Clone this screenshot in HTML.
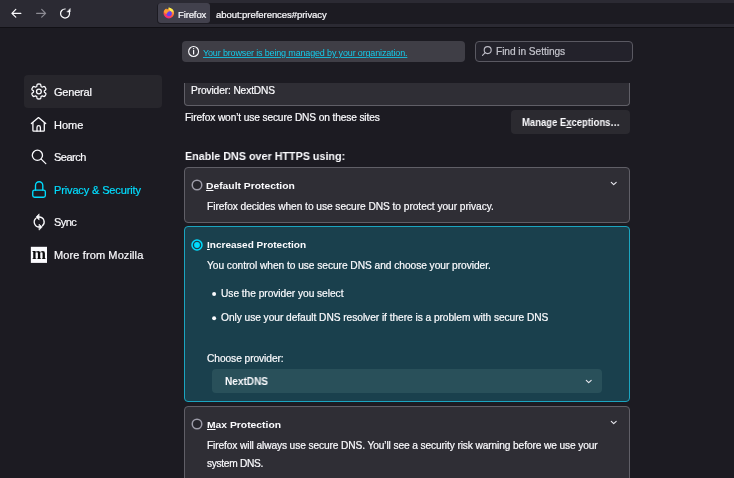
<!DOCTYPE html>
<html><head><meta charset="utf-8"><style>
html,body{margin:0;padding:0;}
body{width:734px;height:478px;overflow:hidden;background:#1c1b22;position:relative;font-family:"Liberation Sans",sans-serif;}
.t{position:absolute;white-space:pre;will-change:transform;-webkit-text-stroke:0.2px currentColor;}
.r{position:absolute;}
u{text-decoration-thickness:1px;text-underline-offset:0.6px;}
</style></head><body>
<div class="r" style="left:0px;top:0px;width:734.00px;height:26.70px;background:#2b2a33;"></div>
<div class="r" style="left:0px;top:26.7px;width:734.00px;height:1.10px;background:#111015;"></div>
<div class="r" style="left:157px;top:2.5px;width:583.00px;height:21.30px;background:#1c1b22;border-radius:4px;"></div>
<div class="r" style="left:158px;top:3px;width:52.00px;height:19.50px;background:#42414d;border-radius:3px;"></div>
<svg class="r" style="left:158px;top:3px" width="22" height="20" viewBox="0 0 22 20">
<defs><linearGradient id="fg" x1="0.75" y1="0" x2="0.35" y2="1"><stop offset="0" stop-color="#fff44f"/><stop offset="0.3" stop-color="#ffa435"/><stop offset="0.65" stop-color="#ff5a3a"/><stop offset="1" stop-color="#f0178f"/></linearGradient></defs>
<circle cx="10.8" cy="10.1" r="5.3" fill="url(#fg)"/>
<path d="M8.2 4.2 L10.6 4.2 L10.2 6.6 L8.4 6.4 Z" fill="#42414d"/>
<path d="M10.6 4.3 C12.8 5 14.8 6.6 15.6 8.6 L12.4 8.8 Z" fill="#fff04a"/>
<circle cx="11.1" cy="10.5" r="2.7" fill="#6a3df0"/>
<path d="M5.8 8.6 C6.4 7 7.6 6 9.2 6.2 C10.6 6.4 11.6 7.4 11.8 8.6 C10.6 8.4 9.6 8.9 9.1 10.2 C8.4 11.2 6.6 10.8 5.8 8.6 Z" fill="#ff9a30"/>
</svg>
<div class="t" id="ff" style="left:177.50px;top:9.66px;font-size:9.5px;line-height:9.5px;color:#fbfbfe;font-weight:400;letter-spacing:-0.123px;">Firefox</div>
<div class="t" id="url" style="left:215.60px;top:9.66px;font-size:9.5px;line-height:9.5px;color:#fbfbfe;font-weight:400;letter-spacing:-0.048px;">about:preferences#privacy</div>
<svg class="r" style="left:0px;top:0px" width="80" height="27" viewBox="0 0 80 27" fill="none" stroke-linecap="round" stroke-linejoin="round">
<path d="M11.9 13.3 H20.9 M15.8 9.4 L11.9 13.3 L15.8 17.2" stroke="#fbfbfe" stroke-width="1.2"/>
<path d="M45.6 13.3 H36.6 M41.7 9.4 L45.6 13.3 L41.7 17.2" stroke="#8c8b93" stroke-width="1.2"/>
<path d="M65 9 A4.5 4.5 0 1 0 69.4 12.3" stroke="#fbfbfe" stroke-width="1.25"/>
<path d="M67.2 11.9 L70.2 11.9 L70.2 8.8 Z" fill="#fbfbfe" stroke="#fbfbfe" stroke-width="0.5"/>
</svg>
<div class="r" style="left:24px;top:75px;width:138.00px;height:32.50px;background:#27262c;border-radius:4px;"></div>
<div class="t" id="sb1" style="left:53.60px;top:87.19px;font-size:11px;line-height:11px;color:#fbfbfe;font-weight:400;letter-spacing:-0.206px;">General</div>
<div class="t" id="sb2" style="left:53.60px;top:119.79px;font-size:11px;line-height:11px;color:#fbfbfe;font-weight:400;letter-spacing:0.018px;">Home</div>
<div class="t" id="sb3" style="left:53.60px;top:152.19px;font-size:11px;line-height:11px;color:#fbfbfe;font-weight:400;letter-spacing:-0.492px;">Search</div>
<div class="t" id="sb4" style="left:53.60px;top:184.59px;font-size:11px;line-height:11px;color:#00ddff;font-weight:400;letter-spacing:-0.138px;">Privacy &amp; Security</div>
<div class="t" id="sb5" style="left:53.60px;top:217.39px;font-size:11px;line-height:11px;color:#fbfbfe;font-weight:400;letter-spacing:-0.590px;">Sync</div>
<div class="t" id="sb6" style="left:53.60px;top:249.59px;font-size:11px;line-height:11px;color:#fbfbfe;font-weight:400;letter-spacing:0.118px;">More from Mozilla</div>
<svg class="r" style="left:28px;top:80px" width="22" height="22" viewBox="0 0 22 22" fill="none" stroke="#fbfbfe" stroke-width="1.3" stroke-linecap="round" stroke-linejoin="round"><path d="M16.29 11.50 L16.29 11.64 L16.30 11.78 L16.33 11.93 L16.38 12.08 L16.46 12.23 L16.61 12.40 L16.84 12.60 L17.14 12.83 L17.45 13.07 L17.70 13.32 L17.85 13.56 L17.90 13.78 L17.90 13.98 L17.87 14.17 L17.81 14.36 L17.74 14.55 L17.67 14.73 L17.58 14.90 L17.49 15.08 L17.40 15.25 L17.29 15.42 L17.19 15.58 L17.08 15.75 L16.96 15.90 L16.84 16.05 L16.70 16.20 L16.55 16.33 L16.37 16.43 L16.16 16.49 L15.88 16.48 L15.54 16.39 L15.17 16.24 L14.82 16.09 L14.54 15.99 L14.31 15.95 L14.14 15.95 L13.98 15.99 L13.85 16.04 L13.72 16.10 L13.60 16.17 L13.47 16.24 L13.36 16.32 L13.24 16.42 L13.14 16.53 L13.05 16.68 L12.97 16.90 L12.92 17.19 L12.87 17.57 L12.81 17.96 L12.72 18.30 L12.59 18.55 L12.43 18.70 L12.25 18.81 L12.07 18.87 L11.88 18.92 L11.68 18.95 L11.49 18.97 L11.29 18.99 L11.10 19.00 L10.90 19.00 L10.70 19.00 L10.51 18.99 L10.31 18.97 L10.12 18.95 L9.92 18.92 L9.73 18.87 L9.55 18.81 L9.37 18.70 L9.21 18.55 L9.08 18.30 L8.99 17.96 L8.93 17.57 L8.88 17.19 L8.83 16.90 L8.75 16.68 L8.66 16.53 L8.56 16.42 L8.44 16.32 L8.33 16.24 L8.20 16.17 L8.08 16.10 L7.95 16.04 L7.82 15.99 L7.66 15.95 L7.49 15.95 L7.26 15.99 L6.98 16.09 L6.63 16.24 L6.26 16.39 L5.92 16.48 L5.64 16.49 L5.43 16.43 L5.25 16.33 L5.10 16.20 L4.96 16.05 L4.84 15.90 L4.72 15.75 L4.61 15.58 L4.51 15.42 L4.40 15.25 L4.31 15.08 L4.22 14.90 L4.13 14.73 L4.06 14.55 L3.99 14.36 L3.93 14.17 L3.90 13.98 L3.90 13.78 L3.95 13.56 L4.10 13.32 L4.35 13.07 L4.66 12.83 L4.96 12.60 L5.19 12.40 L5.34 12.23 L5.42 12.08 L5.47 11.93 L5.50 11.78 L5.51 11.64 L5.51 11.50 L5.51 11.36 L5.50 11.22 L5.47 11.07 L5.42 10.92 L5.34 10.77 L5.19 10.60 L4.96 10.40 L4.66 10.17 L4.35 9.93 L4.10 9.68 L3.95 9.44 L3.90 9.22 L3.90 9.02 L3.93 8.83 L3.99 8.64 L4.06 8.45 L4.13 8.27 L4.22 8.10 L4.31 7.92 L4.40 7.75 L4.51 7.58 L4.61 7.42 L4.72 7.25 L4.84 7.10 L4.96 6.95 L5.10 6.80 L5.25 6.67 L5.43 6.57 L5.64 6.51 L5.92 6.52 L6.26 6.61 L6.63 6.76 L6.98 6.91 L7.26 7.01 L7.49 7.05 L7.66 7.05 L7.82 7.01 L7.95 6.96 L8.08 6.90 L8.20 6.83 L8.33 6.76 L8.44 6.68 L8.56 6.58 L8.66 6.47 L8.75 6.32 L8.83 6.10 L8.88 5.81 L8.93 5.43 L8.99 5.04 L9.08 4.70 L9.21 4.45 L9.37 4.30 L9.55 4.19 L9.73 4.13 L9.92 4.08 L10.12 4.05 L10.31 4.03 L10.51 4.01 L10.70 4.00 L10.90 4.00 L11.10 4.00 L11.29 4.01 L11.49 4.03 L11.68 4.05 L11.88 4.08 L12.07 4.13 L12.25 4.19 L12.43 4.30 L12.59 4.45 L12.72 4.70 L12.81 5.04 L12.87 5.43 L12.92 5.81 L12.97 6.10 L13.05 6.32 L13.14 6.47 L13.24 6.58 L13.36 6.68 L13.47 6.76 L13.60 6.83 L13.72 6.90 L13.85 6.96 L13.98 7.01 L14.14 7.05 L14.31 7.05 L14.54 7.01 L14.82 6.91 L15.17 6.76 L15.54 6.61 L15.88 6.52 L16.16 6.51 L16.37 6.57 L16.55 6.67 L16.70 6.80 L16.84 6.95 L16.96 7.10 L17.08 7.25 L17.19 7.42 L17.29 7.58 L17.40 7.75 L17.49 7.92 L17.58 8.10 L17.67 8.27 L17.74 8.45 L17.81 8.64 L17.87 8.83 L17.90 9.02 L17.90 9.22 L17.85 9.44 L17.70 9.68 L17.45 9.93 L17.14 10.17 L16.84 10.40 L16.61 10.60 L16.46 10.77 L16.38 10.92 L16.33 11.07 L16.30 11.22 L16.29 11.36 L16.29 11.50Z"/><circle cx="10.9" cy="11.5" r="2.4"/></svg>
<svg class="r" style="left:28px;top:114px" width="22" height="22" viewBox="0 0 22 22" fill="none" stroke="#fbfbfe" stroke-width="1.3" stroke-linecap="round" stroke-linejoin="round"><path d="M3.4 9.6 L10.5 3.6 L17.7 9.6"/><path d="M4.9 8.6 V16.4 Q4.9 17.1 5.6 17.1 H15.6 Q16.3 17.1 16.3 16.4 V8.6"/><path d="M9 17.1 V13.4 A1.7 1.7 0 0 1 12.4 13.4 V17.1"/></svg>
<svg class="r" style="left:28px;top:147px" width="22" height="22" viewBox="0 0 22 22" fill="none" stroke="#fbfbfe" stroke-width="1.3" stroke-linecap="round" stroke-linejoin="round"><circle cx="9.4" cy="8.3" r="5.1"/><path d="M13.2 12.1 L17.8 16.6"/></svg>
<svg class="r" style="left:28px;top:179px" width="22" height="22" viewBox="0 0 22 22" fill="none" stroke="#00ddff" stroke-width="1.35" stroke-linecap="round" stroke-linejoin="round"><path d="M7.5 11 V6.4 A3.65 3.65 0 0 1 14.8 6.4 V11"/><rect x="4.75" y="11.05" width="12.6" height="7.2" rx="1.8"/></svg>
<svg class="r" style="left:28px;top:211px" width="22" height="22" viewBox="0 0 22 22" fill="none" stroke="#fbfbfe" stroke-width="1.3" stroke-linecap="round" stroke-linejoin="round"><path d="M11.2 6 A5 5 0 0 1 14.4 14.8"/><path d="M11.2 16 A5 5 0 0 1 8 7.2"/><path d="M10.9 3.1 L8 5.95 L10.9 8.8 Z M11.3 13.3 L14.2 16.1 L11.3 18.9 Z" fill="#fbfbfe" stroke-width="0.6"/></svg>
<svg class="r" style="left:28px;top:244px;will-change:transform" width="22" height="22" viewBox="0 0 22 22"><rect x="2.85" y="2.8" width="16.15" height="16.1" fill="#fbfbfe"/><text x="4" y="15" font-family="Liberation Serif" font-weight="bold" font-size="17.5" textLength="14" lengthAdjust="spacingAndGlyphs" fill="#0c0c0d">m</text></svg>
<div class="r" style="left:182px;top:41px;width:283.00px;height:21.20px;background:#3f3e46;border-radius:4px;"></div>
<svg class="r" style="left:183px;top:40px" width="22" height="22" viewBox="0 0 22 22" fill="none" stroke="#fbfbfe" stroke-width="1.1"><circle cx="10.6" cy="11.5" r="4.95"/><path d="M10.6 10.4 V14" stroke-width="1.2" stroke-linecap="round"/><circle cx="10.6" cy="8.6" r="0.7" fill="#fbfbfe" stroke="none"/></svg>
<div class="t" id="notice" style="left:203.30px;top:48.68px;font-size:9px;line-height:9px;color:#14cbeb;font-weight:400;letter-spacing:-0.156px;-webkit-text-stroke:0;text-decoration:underline;text-decoration-color:#17b4d2;text-decoration-thickness:0.8px;text-underline-offset:1.2px;">Your browser is being managed by your organization.</div>
<div class="r" style="left:475.2px;top:40.5px;width:157.80px;height:21.80px;background:#23222b;border:1px solid #5a5962;border-radius:4px;box-sizing:border-box;"></div>
<svg class="r" style="left:476px;top:40px" width="22" height="22" viewBox="0 0 22 22" fill="none" stroke="#bdbcc6" stroke-width="1.1" stroke-linecap="round"><circle cx="11.7" cy="10.1" r="3.5"/><path d="M9.2 12.7 L6.5 15.3"/></svg>
<div class="t" id="find" style="left:495.90px;top:47.27px;font-size:10.2px;line-height:10.2px;color:#c4c4cc;font-weight:400;letter-spacing:-0.069px;">Find in Settings</div>
<div class="r" style="left:184px;top:82.5px;width:446.00px;height:23.30px;background:#2f2e35;border:1px solid #605f67;border-top:none;border-radius:0 0 4px 4px;box-sizing:border-box;"></div>
<div class="t" id="prov" style="left:191.30px;top:85.87px;font-size:10.2px;line-height:10.2px;color:#fbfbfe;font-weight:400;letter-spacing:-0.122px;">Provider: NextDNS</div>
<div class="t" id="wont" style="left:185.00px;top:112.77px;font-size:10.2px;line-height:10.2px;color:#fbfbfe;font-weight:400;letter-spacing:-0.134px;">Firefox won’t use secure DNS on these sites</div>
<div class="r" style="left:510.5px;top:110.3px;width:119.20px;height:23.40px;background:#2b2a30;border-radius:4px;"></div>
<div class="t" id="manage" style="left:522.00px;top:117.94px;font-size:10px;line-height:10px;color:#fbfbfe;font-weight:700;transform:scaleX(0.9476);transform-origin:0 0;-webkit-text-stroke:0;">Manage E<u>x</u>ceptions…</div>
<div class="t" id="enable" style="left:184.90px;top:150.38px;font-size:11.6px;line-height:11.6px;color:#fbfbfe;font-weight:700;transform:scaleX(0.9275);transform-origin:0 0;-webkit-text-stroke:0;">Enable DNS over HTTPS using:</div>
<div class="r" style="left:184px;top:167px;width:446.00px;height:56.00px;background:#2f2e35;border:1px solid #605f67;border-radius:4px;box-sizing:border-box;"></div>
<svg class="r" style="left:188.8px;top:177.2px" width="16" height="16" viewBox="0 0 16 16"><circle cx="8" cy="8" r="4.75" fill="#25242b" stroke="#9d9ca9" stroke-width="1.5"/></svg>
<div class="t" id="def" style="left:206.40px;top:181.30px;font-size:9.8px;line-height:9.8px;color:#fbfbfe;font-weight:700;transform:scaleX(1.0529);transform-origin:0 0;-webkit-text-stroke:0;"><u>D</u>efault Protection</div>
<svg class="r" style="left:603px;top:173px" width="22" height="22" viewBox="0 0 22 22" fill="none" stroke="#e8e8ee" stroke-width="1.15" stroke-linecap="round" stroke-linejoin="round"><path d="M8.3 9.4 L10.7 11.7 L13.2 9.4"/></svg>
<div class="t" id="defd" style="left:206.80px;top:201.77px;font-size:10.2px;line-height:10.2px;color:#fbfbfe;font-weight:400;letter-spacing:-0.047px;">Firefox decides when to use secure DNS to protect your privacy.</div>
<div class="r" style="left:184px;top:225.8px;width:446.00px;height:176.00px;background:#1a404d;border:1px solid #1ba5c0;border-radius:4px;box-sizing:border-box;"></div>
<svg class="r" style="left:188.6px;top:236.6px" width="16" height="16" viewBox="0 0 16 16"><circle cx="8" cy="8" r="5" fill="#1a404d" stroke="#00ddff" stroke-width="1.5"/><circle cx="8" cy="8" r="2.9" fill="#00ddff"/></svg>
<div class="t" id="inc" style="left:206.70px;top:240.30px;font-size:9.8px;line-height:9.8px;color:#fbfbfe;font-weight:700;transform:scaleX(1.0225);transform-origin:0 0;-webkit-text-stroke:0;"><u>I</u>ncreased Protection</div>
<div class="t" id="incd" style="left:206.50px;top:260.67px;font-size:10.2px;line-height:10.2px;color:#fbfbfe;font-weight:400;letter-spacing:-0.040px;">You control when to use secure DNS and choose your provider.</div>
<svg class="r" style="left:206px;top:285.5px" width="16" height="40" viewBox="0 0 16 40"><circle cx="8.1" cy="8" r="2" fill="#fbfbfe"/><circle cx="8.1" cy="32.3" r="2" fill="#fbfbfe"/></svg>
<div class="t" id="b1" style="left:221.30px;top:288.77px;font-size:10.2px;line-height:10.2px;color:#fbfbfe;font-weight:400;letter-spacing:-0.037px;">Use the provider you select</div>
<div class="t" id="b2" style="left:221.30px;top:312.77px;font-size:10.2px;line-height:10.2px;color:#fbfbfe;font-weight:400;letter-spacing:-0.046px;">Only use your default DNS resolver if there is a problem with secure DNS</div>
<div class="t" id="choose" style="left:206.60px;top:353.57px;font-size:10.2px;line-height:10.2px;color:#fbfbfe;font-weight:400;letter-spacing:-0.059px;">Choose provider:</div>
<div class="r" style="left:211.8px;top:369.3px;width:390.70px;height:23.40px;background:#29505a;border-radius:4px;"></div>
<div class="t" id="nextdns" style="left:225.00px;top:376.97px;font-size:10.2px;line-height:10.2px;color:#fbfbfe;font-weight:700;transform:scaleX(0.9861);transform-origin:0 0;-webkit-text-stroke:0;">NextDNS</div>
<svg class="r" style="left:577.5px;top:370.8px" width="22" height="22" viewBox="0 0 22 22" fill="none" stroke="#e8e8ee" stroke-width="1.15" stroke-linecap="round" stroke-linejoin="round"><path d="M8.3 9.4 L10.7 11.7 L13.2 9.4"/></svg>
<div class="r" style="left:184px;top:405.8px;width:446.00px;height:84.20px;background:#2f2e35;border:1px solid #605f67;border-radius:4px;box-sizing:border-box;"></div>
<svg class="r" style="left:188.9px;top:416.2px" width="16" height="16" viewBox="0 0 16 16"><circle cx="8" cy="8" r="4.75" fill="#25242b" stroke="#9d9ca9" stroke-width="1.5"/></svg>
<div class="t" id="max" style="left:206.50px;top:419.80px;font-size:9.8px;line-height:9.8px;color:#fbfbfe;font-weight:700;transform:scaleX(1.0540);transform-origin:0 0;-webkit-text-stroke:0;"><u>M</u>ax Protection</div>
<svg class="r" style="left:603px;top:411.8px" width="22" height="22" viewBox="0 0 22 22" fill="none" stroke="#e8e8ee" stroke-width="1.15" stroke-linecap="round" stroke-linejoin="round"><path d="M8.3 9.4 L10.7 11.7 L13.2 9.4"/></svg>
<div class="t" id="maxd1" style="left:206.50px;top:441.07px;font-size:10.2px;line-height:10.2px;color:#fbfbfe;font-weight:400;letter-spacing:-0.115px;">Firefox will always use secure DNS. You’ll see a security risk warning before we use your</div>
<div class="t" id="maxd2" style="left:206.50px;top:459.27px;font-size:10.2px;line-height:10.2px;color:#fbfbfe;font-weight:400;letter-spacing:-0.315px;">system DNS.</div>
</body></html>
